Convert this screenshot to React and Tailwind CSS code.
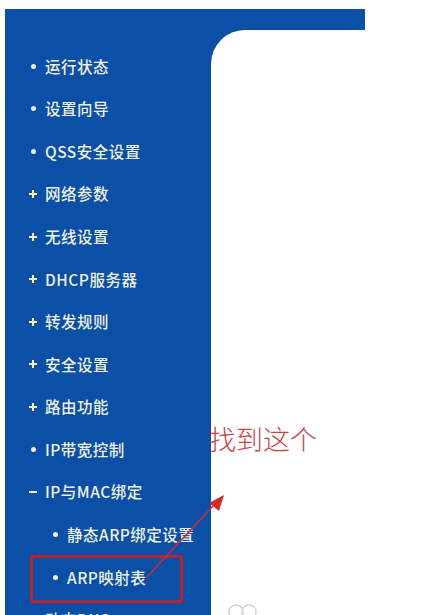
const menu = [
  { mark: 'dot', label: '运行状态' },
  { mark: 'dot', label: '设置向导' },
  { mark: 'dot', label: 'QSS安全设置' },
  { mark: 'plus', label: '网络参数' },
  { mark: 'plus', label: '无线设置' },
  { mark: 'plus', label: 'DHCP服务器' },
  { mark: 'plus', label: '转发规则' },
  { mark: 'plus', label: '安全设置' },
  { mark: 'plus', label: '路由功能' },
  { mark: 'dot', label: 'IP带宽控制' },
  { mark: 'minus', label: 'IP与MAC绑定' },
  { mark: 'dot', label: '静态ARP绑定设置', sub: true },
  { mark: 'dot', label: 'ARP映射表', sub: true, boxed: true },
  { mark: 'dot', label: '动态DNS' },
]

function Mark({ type }) {
  if (type === 'plus') {
    return (
      <span className="relative inline-block h-[8px] w-[8px]">
        <span className="absolute left-0 top-[3px] h-[2px] w-[8px] bg-[#f6f0a8]" />
        <span className="absolute left-[3px] top-0 h-[8px] w-[2px] bg-[#f6f0a8]" />
      </span>
    )
  }
  if (type === 'minus') {
    return <span className="inline-block h-[2px] w-[8px] bg-[#f4f4e8]" />
  }
  return <span className="inline-block h-[5px] w-[5px] rounded-full bg-[#eef2e6]" />
}

function MenuItem({ item }) {
  return (
    <li
      className={`flex h-[42.6px] items-center gap-[8px] ${
        item.sub ? 'pl-[46px]' : 'pl-[24px]'
      } ${item.boxed ? 'relative' : ''}`}
    >
      {item.boxed ? (
        <span className="absolute left-[25px] top-[-1px] h-[48px] w-[153px] border-[3px] border-[#b5232e]" />
      ) : null}
      <span className="flex w-[8px] justify-center">
        <Mark type={item.mark} />
      </span>
      <span className="text-[15.5px] font-medium leading-none tracking-[0.5px] text-[#eef1e2]">
        {item.label}
      </span>
    </li>
  )
}

export default function App() {
  return (
    <div
      className="relative h-[615px] w-[438px] overflow-hidden bg-white"
      style={{ fontFamily: '"Noto Sans CJK SC", "Noto Sans", sans-serif' }}
    >
      <div className="ml-[5px] mt-[9px] flex h-[606px]">
        <aside className="w-[206px] bg-[#0b4fa6]">
          <ul className="pt-[36px]">
            {menu.map((item) => (
              <MenuItem key={item.label} item={item} />
            ))}
          </ul>
        </aside>
        <div className="flex w-[154px] flex-col bg-[#0b4fa6]">
          <div className="h-[21px]" />
          <div className="flex-1 rounded-tl-[34px] bg-white" />
        </div>
      </div>

      <p className="absolute left-[209px] top-[425px] text-[27px] leading-none font-light text-[#c94348]">
        找到这个
      </p>

      <svg className="absolute left-0 top-0" width="438" height="615" viewBox="0 0 438 615">
        <line x1="146" y1="578" x2="214" y2="505" stroke="#c4303a" strokeWidth="1.6" />
        <polygon points="224,495 219,511 209,503" fill="#d42a2a" />
        <g fill="none" stroke="#d4d4d4" strokeWidth="1.5">
          <circle cx="236" cy="612" r="7" />
          <circle cx="249" cy="612" r="7" />
        </g>
      </svg>
    </div>
  )
}
